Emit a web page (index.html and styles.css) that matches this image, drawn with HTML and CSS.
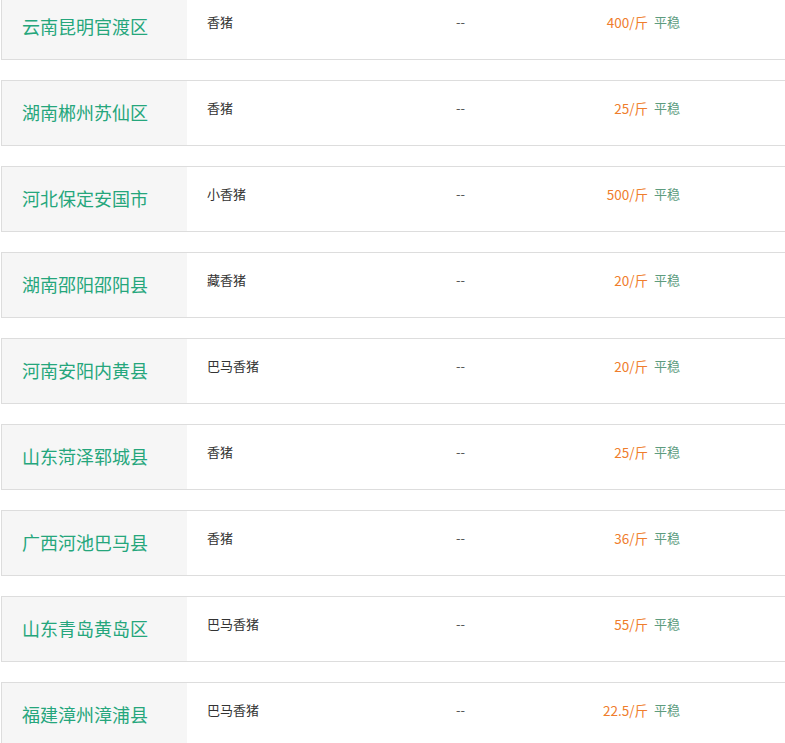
FILE: index.html
```html
<!DOCTYPE html>
<html lang="zh">
<head>
<meta charset="utf-8">
<link rel="stylesheet" href="styles.css">
</head>
<body>
<div class="list">
  <div class="row"><div class="place">云南昆明官渡区</div><div class="kind">香猪</div><div class="dash">--</div><div class="price">400/斤</div><div class="trend">平稳</div></div>
  <div class="row"><div class="place">湖南郴州苏仙区</div><div class="kind">香猪</div><div class="dash">--</div><div class="price">25/斤</div><div class="trend">平稳</div></div>
  <div class="row"><div class="place">河北保定安国市</div><div class="kind">小香猪</div><div class="dash">--</div><div class="price">500/斤</div><div class="trend">平稳</div></div>
  <div class="row"><div class="place">湖南邵阳邵阳县</div><div class="kind">藏香猪</div><div class="dash">--</div><div class="price">20/斤</div><div class="trend">平稳</div></div>
  <div class="row"><div class="place">河南安阳内黄县</div><div class="kind">巴马香猪</div><div class="dash">--</div><div class="price">20/斤</div><div class="trend">平稳</div></div>
  <div class="row"><div class="place">山东菏泽郓城县</div><div class="kind">香猪</div><div class="dash">--</div><div class="price">25/斤</div><div class="trend">平稳</div></div>
  <div class="row"><div class="place">广西河池巴马县</div><div class="kind">香猪</div><div class="dash">--</div><div class="price">36/斤</div><div class="trend">平稳</div></div>
  <div class="row"><div class="place">山东青岛黄岛区</div><div class="kind">巴马香猪</div><div class="dash">--</div><div class="price">55/斤</div><div class="trend">平稳</div></div>
  <div class="row"><div class="place">福建漳州漳浦县</div><div class="kind">巴马香猪</div><div class="dash">--</div><div class="price">22.5/斤</div><div class="trend">平稳</div></div>
</div>
</body>
</html>
```
FILE: styles.css
```css
html, body {
  margin: 0;
  padding: 0;
  background: #fff;
  overflow: hidden;
}
body {
  font-family: "Microsoft YaHei", "Noto Sans CJK SC", "Noto Sans", sans-serif;
  color: #333;
}
.list {
  margin-top: -6px;
  padding-left: 1px;
  display: flex;
  flex-direction: column;
  gap: 20px;
}
.row {
  display: grid;
  grid-template-columns: 185px 269px 80px 112px 1fr;
  height: 66px;
  box-sizing: border-box;
  border: 1px solid #ddd;
  border-right: none;
  background: #fff;
}
.place {
  background: #f6f6f6;
  color: #25a67c;
  font-size: 18px;
  line-height: 63px;
  padding-left: 20px;
  white-space: nowrap;
}
.kind, .dash, .price, .trend {
  font-size: 13px;
  line-height: 20px;
  padding-top: 17px;
  white-space: nowrap;
}
.kind {
  padding-left: 20px;
}
.dash {
  color: #555;
}
.price {
  color: #ef7d2c;
  text-align: right;
  font-size: 13.5px;
}
.trend {
  color: #5d9c7e;
  padding-left: 6px;
}
```
